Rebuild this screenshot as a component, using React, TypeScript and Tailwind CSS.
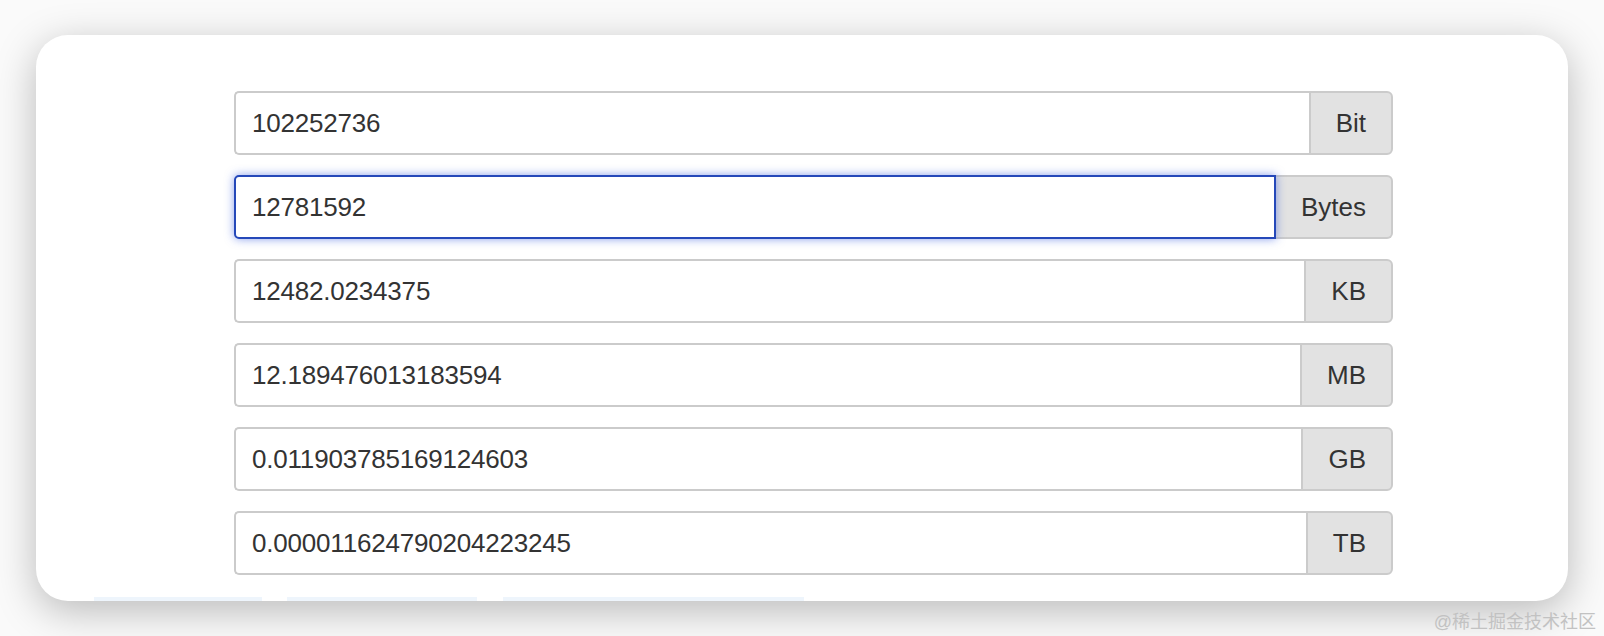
import React from "react";

const rows: { value: string; unit: string; focused?: boolean }[] = [
  { value: "102252736", unit: "Bit" },
  { value: "12781592", unit: "Bytes", focused: true },
  { value: "12482.0234375", unit: "KB" },
  { value: "12.189476013183594", unit: "MB" },
  { value: "0.011903785169124603", unit: "GB" },
  { value: "0.000011624790204223245", unit: "TB" },
];

export default function App() {
  return (
    <div
      className="relative w-[1604px] h-[636px] bg-[#fafafa] pt-[35px] px-[36px] overflow-hidden"
      style={{ fontFamily: '"Liberation Sans", Arial, sans-serif' }}
    >
      <div className="h-[566px] bg-white rounded-[32px] shadow-[0_10px_40px_rgba(0,0,0,0.26)] overflow-hidden flex flex-col">
        <div className="ml-[198px] w-[1159px] pt-[56px] flex flex-col gap-[20px]">
          {rows.map((r) => (
            <div key={r.unit} className="flex h-[64px]">
              <div
                className={
                  r.focused
                    ? "relative z-10 flex-1 flex items-center pl-[16px] bg-white border-2 border-[#2548b9] rounded-l-[5px] shadow-[0_0_10px_rgba(40,80,220,0.55)]"
                    : "flex-1 flex items-center pl-[16px] bg-white border-2 border-r-0 border-[#cbcbcb] rounded-l-[5px]"
                }
              >
                <span className="text-[26px] text-[#333] tracking-[-0.2px]">{r.value}</span>
              </div>
              <div
                className={
                  r.focused
                    ? "flex items-center px-[25px] bg-[#e2e2e2] border-2 border-l-0 border-[#cbcbcb] rounded-r-[6px] text-[26px] text-[#333]"
                    : "flex items-center px-[25px] bg-[#e2e2e2] border-2 border-[#cbcbcb] rounded-r-[6px] text-[26px] text-[#333]"
                }
              >
                {r.unit}
              </div>
            </div>
          ))}
        </div>
        <div className="mt-[22px] flex h-[10px]">
          <div className="ml-[58px] w-[168px] bg-[#eef5fc]" />
          <div className="ml-[25px] w-[190px] bg-[#eef5fc]" />
          <div className="ml-[26px] w-[301px] bg-[#eef5fc]" />
        </div>
      </div>
      <div
        className="absolute right-[8px] bottom-[5px] text-[18px] leading-none text-[#c2c2c2]"
        style={{ fontFamily: '"Liberation Sans", "Noto Sans CJK SC", sans-serif' }}
      >
        @稀土掘金技术社区
      </div>
    </div>
  );
}
